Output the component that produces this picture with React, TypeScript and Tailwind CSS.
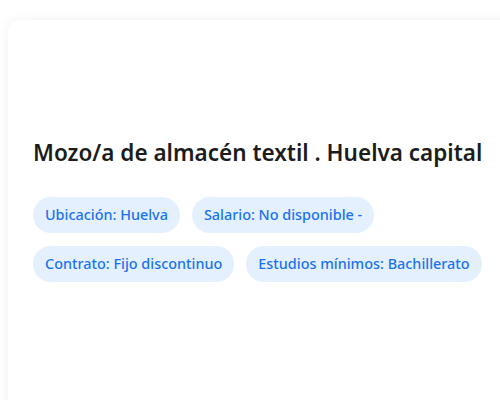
const chips = [
  'Ubicación: Huelva',
  'Salario: No disponible -',
  'Contrato: Fijo discontinuo',
  'Estudios mínimos: Bachillerato',
];

export default function App() {
  return (
    <div className="w-[500px] h-[400px] overflow-hidden bg-white pl-2 pt-5" style={{ fontFamily: '"Noto Sans", "Open Sans", sans-serif' }}>
      <div className="w-[520px] h-[420px] rounded-xl bg-white shadow-[0_0_12px_rgba(0,0,0,0.06)] pl-[25px] pt-[118px]">
        <h1 className="text-[22.5px] leading-[30px] font-semibold text-[#1c1c1c]">
          Mozo/a de almacén textil . Huelva capital
        </h1>
        <div className="mt-[29px] flex flex-wrap gap-x-3 gap-y-[13px] w-[470px]">
          {chips.map(c => (
            <span
              key={c}
              className="h-9 px-3 rounded-full bg-[#e5f0ff] text-[#1873f0] text-[14.4px] font-medium flex items-center"
            >
              {c}
            </span>
          ))}
        </div>
      </div>
    </div>
  );
}
